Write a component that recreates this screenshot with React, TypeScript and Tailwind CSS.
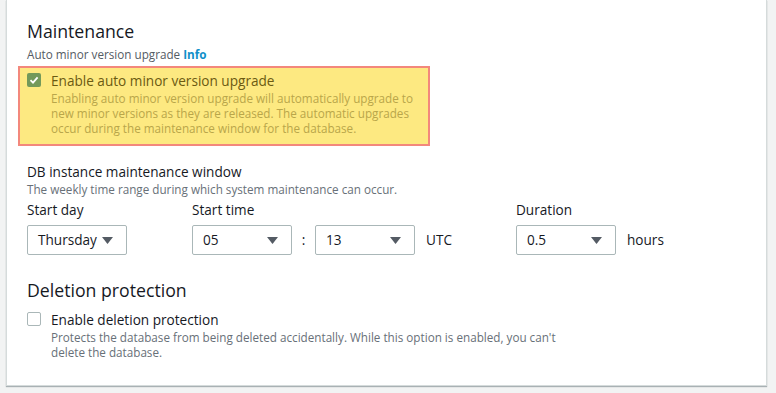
import React from 'react';

const Arrow = () => (
  <svg width="11" height="7" viewBox="0 0 11 7" className="shrink-0">
    <path d="M0 0 L11 0 L5.5 7 Z" fill="#545b64" />
  </svg>
);

const SelectBox = ({ value }: { value: string }) => (
  <div className="flex h-[30px] w-[100px] items-center justify-between rounded-[2px] border border-[#aab7b8] bg-white pl-[10px] pr-[13px] text-[13.6px] text-[#16191f]">
    <span>{value}</span>
    <Arrow />
  </div>
);

const App: React.FC = () => {
  return (
    <div
      className="min-h-screen bg-[#f2f3f3] pb-[8px] pl-[6px] pr-[9px]"
      style={{ fontFamily: '"Open Sans", Arial, sans-serif' }}
    >
      <div className="border border-t-0 border-[#d5dbdb] bg-white px-[20px] pb-[25px] pt-[20px] shadow-[0_1px_1px_0_rgba(0,28,36,0.3)]">
        <h2 className="text-[17.7px] leading-[22px] text-[#16191f]">Maintenance</h2>
        <p className="mt-[4px] text-[11.7px] leading-[16px] text-[#545b64]">
          Auto minor version upgrade <span className="font-bold text-[#0f8fc9]">Info</span>
        </p>

        {/* highlighted option */}
        <div className="-ml-[9px] mt-[4px] flex w-[412px] gap-[10px] border-2 border-[#f3887c] bg-[#fde981] pb-[8px] pl-[7px] pt-[4px]">
          <div className="mt-[1px] flex h-[14px] w-[14px] shrink-0 items-center justify-center rounded-[2px] bg-[#73995a]">
            <svg width="10" height="10" viewBox="0 0 10 10">
              <path d="M1.5 5.2 L4 7.6 L8.6 2.4" fill="none" stroke="#fff" strokeWidth="1.8" />
            </svg>
          </div>
          <div>
            <div className="text-[13.6px] leading-[18px] text-[#6b5a12]">Enable auto minor version upgrade</div>
            <div className="mt-[1px] text-[11.7px] leading-[15px] text-[#b9a64a]">
              Enabling auto minor version upgrade will automatically upgrade to
              <br />
              new minor versions as they are released. The automatic upgrades
              <br />
              occur during the maintenance window for the database.
            </div>
          </div>
        </div>

        <div className="mt-[17px] text-[13.6px] leading-[18px] text-[#16191f]">DB instance maintenance window</div>
        <div className="text-[11.7px] leading-[16px] text-[#687078]">
          The weekly time range during which system maintenance can occur.
        </div>

        <div className="mt-[4px] flex">
          <div className="w-[165px]">
            <div className="text-[13.6px] leading-[18px] text-[#16191f]">Start day</div>
            <div className="mt-[6px]">
              <SelectBox value="Thursday" />
            </div>
          </div>
          <div className="w-[324px]">
            <div className="text-[13.6px] leading-[18px] text-[#16191f]">Start time</div>
            <div className="mt-[6px] flex items-center text-[13.6px] text-[#16191f]">
              <SelectBox value="05" />
              <span className="w-[23px] text-center">:</span>
              <SelectBox value="13" />
              <span className="ml-[11px]">UTC</span>
            </div>
          </div>
          <div>
            <div className="text-[13.6px] leading-[18px] text-[#16191f]">Duration</div>
            <div className="mt-[6px] flex items-center text-[13.6px] text-[#16191f]">
              <SelectBox value="0.5" />
              <span className="ml-[11px]">hours</span>
            </div>
          </div>
        </div>

        <h2 className="mt-[24px] text-[17.7px] leading-[22px] text-[#16191f]">Deletion protection</h2>
        <div className="mt-[10px] flex gap-[10px]">
          <div className="mt-[1px] h-[14px] w-[14px] shrink-0 rounded-[2px] border border-[#aab7b8] bg-white" />
          <div>
            <div className="text-[13.6px] leading-[18px] text-[#16191f]">Enable deletion protection</div>
            <div className="mt-[1px] text-[11.7px] leading-[15px] text-[#687078]">
              Protects the database from being deleted accidentally. While this option is enabled, you can't
              <br />
              delete the database.
            </div>
          </div>
        </div>
      </div>
    </div>
  );
};

export default App;
